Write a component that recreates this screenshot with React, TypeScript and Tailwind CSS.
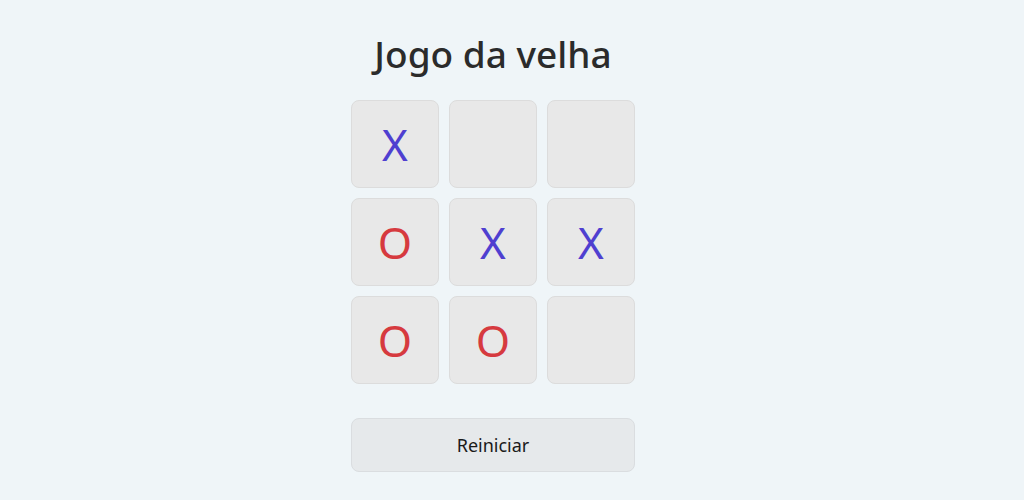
import React, { useState } from "react";

type Cell = "X" | "O" | null;

const initial: Cell[] = ["X", null, null, "O", "X", "X", "O", "O", null];

function App() {
  const [board, setBoard] = useState<Cell[]>(initial);

  return (
    <div
      className="min-h-screen w-full bg-[#eff5f8] flex flex-col items-center pr-[38px]"
      style={{ fontFamily: '"Noto Sans", "Open Sans", sans-serif' }}
    >
      <h1 className="mt-[30px] text-[37px] leading-[48px] text-[#2b2b2b] font-medium">
        Jogo da velha
      </h1>
      <div className="mt-[22px] grid grid-cols-3 gap-[10px]">
        {board.map((cell, i) => (
          <button
            key={i}
            className="w-[88px] h-[88px] rounded-lg bg-[#e8e8e8] border border-[#dcdcdc] flex items-center justify-center"
          >
            {cell && (
              <span
                className={
                  cell === "X"
                    ? "text-[44px] leading-none text-[#4f3fd0]"
                    : "text-[44px] leading-none text-[#d63a3f]"
                }
              >
                {cell}
              </span>
            )}
          </button>
        ))}
      </div>
      <button
        onClick={() => setBoard(Array(9).fill(null))}
        className="mt-[34px] w-[284px] h-[54px] rounded-lg bg-[#e6e9eb] border border-[#dadde0] text-[18px] text-[#1a1a1a]"
      >
        Reiniciar
      </button>
    </div>
  );
}

export default App;
